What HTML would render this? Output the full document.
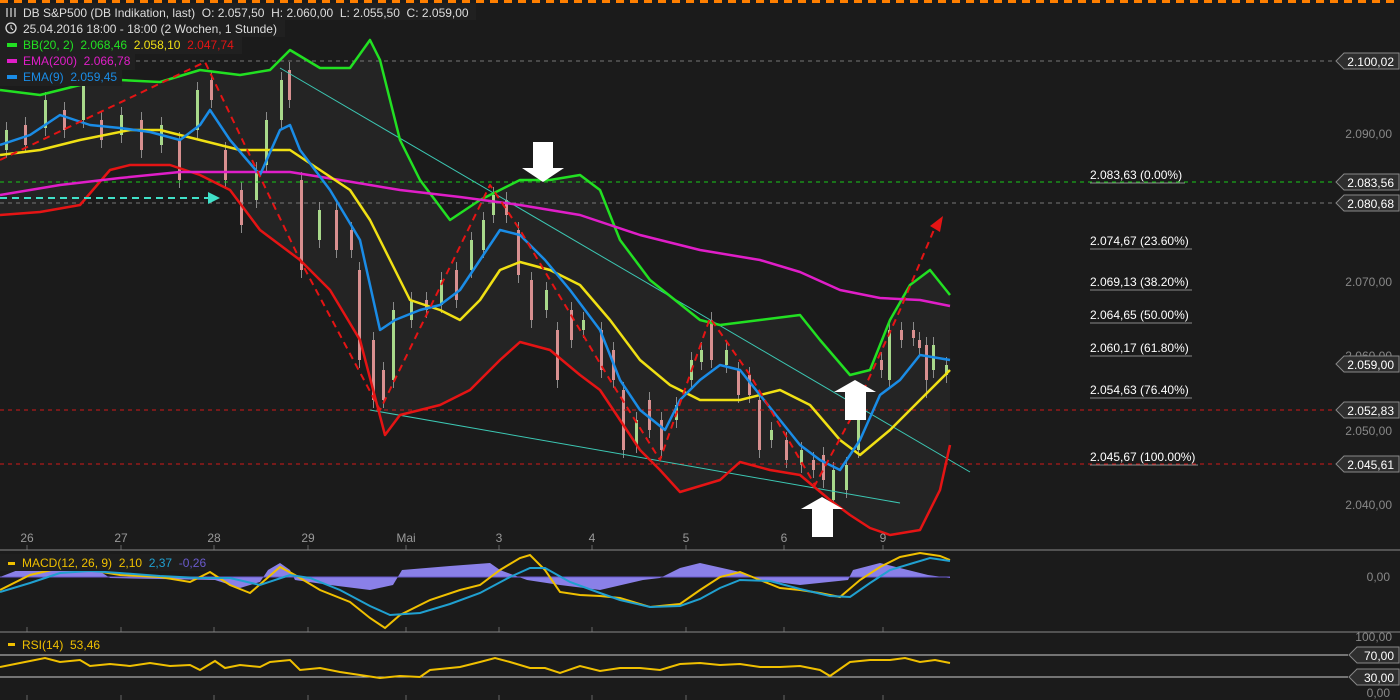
<!DOCTYPE html>
<html><head><meta charset="utf-8"><style>
html,body{margin:0;padding:0;background:#1b1b1b;}
svg{display:block;font-family:"Liberation Sans",sans-serif;}
text{white-space:pre;}
</style></head><body>
<svg width="1400" height="700" viewBox="0 0 1400 700" xmlns="http://www.w3.org/2000/svg">
<rect width="1400" height="700" fill="#1b1b1b"/>
<line x1="0" y1="1.5" x2="1400" y2="1.5" stroke="#ff7f00" stroke-width="3" stroke-dasharray="8,6"/>
<polygon fill="#242424" points="0,90 40,95 80,85 120,80 160,82 200,70 240,75 270,70 290,50 320,68 350,68 370,40 380,60 400,140 420,180 450,220 480,200 500,190 520,180 550,180 580,175 600,190 620,240 650,280 700,320 720,325 760,320 800,315 820,340 850,375 870,370 890,320 910,285 930,270 950,295 950,445 940,490 920,530 890,535 870,528 850,515 830,500 800,475 770,470 740,462 720,480 680,492 660,470 640,450 620,420 600,390 580,375 550,350 520,342 500,360 470,390 440,405 400,415 385,435 360,340 330,290 300,260 260,230 230,190 200,175 170,165 130,165 110,170 80,205 40,212 0,215"/>
<path stroke="#8a8a8a" stroke-width="1" fill="none" d="M6.5 122V158M25.5 117V153M45.5 92V136M64.5 102V138M83.5 77V128M101.5 112V148M121.5 107V143M141.5 112V158M161.5 117V153M179.5 132V188M197.5 82V138M211.5 72V108M225.5 142V188M241.5 182V233M256.5 162V208M266.5 112V173M281.5 72V128M289.5 62V108M301.5 172V278M319.5 202V248M336.5 202V258M351.5 222V258M359.5 262V368M373.5 332V408M383.5 362V408M393.5 302V388M411.5 292V328M426.5 292V318M441.5 272V313M456.5 262V308M471.5 232V278M483.5 212V258M493.5 187V223M506.5 192V223M518.5 222V283M531.5 272V328M546.5 282V318M557.5 322V388M571.5 302V348M583.5 312V338M601.5 322V378M613.5 342V388M623.5 382V458M636.5 412V453M649.5 392V438M661.5 412V458M676.5 397V428M691.5 352V388M701.5 342V370M711.5 312V368M726.5 342V373M738.5 362V403M749.5 367V403M759.5 392V458M771.5 422V448M786.5 432V468M801.5 442V473M813.5 452V478M823.5 447V488M833.5 462V508M846.5 457V498M858.5 392V458M881.5 352V378M889.5 322V388M901.5 322V348M913.5 322V346M919.5 332V356M926.5 337V398M933.5 337V378M946.5 357V383"/>
<g fill="#d89090">
<rect x="24" y="125" width="3" height="20"/><rect x="63" y="110" width="3" height="20"/><rect x="100" y="120" width="3" height="20"/><rect x="140" y="120" width="3" height="30"/><rect x="178" y="140" width="3" height="40"/><rect x="210" y="80" width="3" height="20"/><rect x="224" y="150" width="3" height="30"/><rect x="240" y="190" width="3" height="35"/><rect x="288" y="70" width="3" height="30"/><rect x="300" y="180" width="3" height="90"/><rect x="335" y="210" width="3" height="40"/><rect x="350" y="230" width="3" height="20"/><rect x="358" y="270" width="3" height="90"/><rect x="372" y="340" width="3" height="60"/><rect x="382" y="370" width="3" height="30"/><rect x="425" y="300" width="3" height="10"/><rect x="455" y="270" width="3" height="30"/><rect x="505" y="200" width="3" height="15"/><rect x="517" y="230" width="3" height="45"/><rect x="530" y="280" width="3" height="40"/><rect x="556" y="330" width="3" height="50"/><rect x="570" y="310" width="3" height="30"/><rect x="600" y="330" width="3" height="40"/><rect x="612" y="350" width="3" height="30"/><rect x="622" y="390" width="3" height="60"/><rect x="648" y="400" width="3" height="30"/><rect x="660" y="420" width="3" height="30"/><rect x="710" y="320" width="3" height="40"/><rect x="737" y="370" width="3" height="25"/><rect x="748" y="375" width="3" height="20"/><rect x="758" y="400" width="3" height="50"/><rect x="785" y="440" width="3" height="20"/><rect x="812" y="460" width="3" height="10"/><rect x="822" y="455" width="3" height="25"/><rect x="880" y="360" width="3" height="10"/><rect x="900" y="330" width="3" height="10"/><rect x="912" y="330" width="3" height="8"/><rect x="918" y="340" width="3" height="8"/><rect x="925" y="345" width="3" height="35"/>
</g>
<g fill="#a8d88a">
<rect x="5" y="130" width="3" height="20"/><rect x="44" y="100" width="3" height="28"/><rect x="82" y="85" width="3" height="35"/><rect x="120" y="115" width="3" height="20"/><rect x="160" y="125" width="3" height="20"/><rect x="196" y="90" width="3" height="40"/><rect x="255" y="170" width="3" height="30"/><rect x="265" y="120" width="3" height="45"/><rect x="280" y="80" width="3" height="40"/><rect x="318" y="210" width="3" height="30"/><rect x="392" y="310" width="3" height="70"/><rect x="410" y="300" width="3" height="20"/><rect x="440" y="280" width="3" height="25"/><rect x="470" y="240" width="3" height="30"/><rect x="482" y="220" width="3" height="30"/><rect x="492" y="195" width="3" height="20"/><rect x="545" y="290" width="3" height="20"/><rect x="582" y="320" width="3" height="10"/><rect x="635" y="420" width="3" height="25"/><rect x="675" y="405" width="3" height="15"/><rect x="690" y="360" width="3" height="20"/><rect x="700" y="350" width="3" height="12"/><rect x="725" y="350" width="3" height="15"/><rect x="770" y="430" width="3" height="10"/><rect x="800" y="450" width="3" height="15"/><rect x="832" y="470" width="3" height="30"/><rect x="845" y="465" width="3" height="25"/><rect x="857" y="400" width="3" height="50"/><rect x="888" y="330" width="3" height="50"/><rect x="932" y="345" width="3" height="25"/><rect x="945" y="365" width="3" height="10"/>
</g>
<line x1="0" y1="61" x2="1338" y2="61" stroke="#777" stroke-dasharray="4,4"/>
<line x1="0" y1="182" x2="1338" y2="182" stroke="#19c819" stroke-dasharray="4,4"/>
<line x1="0" y1="203" x2="1338" y2="203" stroke="#777" stroke-dasharray="4,4"/>
<line x1="0" y1="410" x2="1338" y2="410" stroke="#d01818" stroke-dasharray="4,4"/>
<line x1="0" y1="464" x2="1338" y2="464" stroke="#d01818" stroke-dasharray="4,4"/>
<line x1="280" y1="68" x2="970" y2="472" stroke="#3cc8b4" stroke-width="1"/>
<line x1="370" y1="410" x2="900" y2="503" stroke="#3cc8b4" stroke-width="1"/>
<g fill="none" stroke-width="2.5" stroke-linejoin="round">
<polyline stroke="#22e022" points="0,90 40,95 80,85 120,80 160,82 200,70 240,75 270,70 290,50 320,68 350,68 370,40 380,60 400,140 420,180 450,220 480,200 500,190 520,180 550,180 580,175 600,190 620,240 650,280 700,320 720,325 760,320 800,315 820,340 850,375 870,370 890,320 910,285 930,270 950,295"/>
<polyline stroke="#e51414" points="0,215 40,212 80,205 110,170 130,165 170,165 200,175 230,190 260,230 300,260 330,290 360,340 385,435 400,415 440,405 470,390 500,360 520,342 550,350 580,375 600,390 620,420 640,450 660,470 680,492 720,480 740,462 770,470 800,475 830,500 850,515 870,528 890,535 920,530 940,490 950,445"/>
<polyline stroke="#e01ec8" points="0,195 60,185 120,178 180,172 240,172 290,172 340,180 400,190 460,197 520,205 580,215 640,235 700,250 760,260 800,272 840,290 880,298 920,300 950,306"/>
<polyline stroke="#f0e014" points="0,155 40,150 80,140 130,130 160,130 200,140 240,150 290,150 320,170 350,190 370,220 390,260 410,300 440,310 460,320 480,300 500,270 520,262 550,270 580,285 610,320 640,360 670,385 700,400 740,400 780,390 810,405 840,440 860,455 890,430 920,400 950,370"/>
<polyline stroke="#1a8ce6" points="0,145 30,135 60,115 90,125 120,128 150,132 180,140 200,125 210,110 230,140 260,175 280,130 290,125 300,150 330,190 360,240 380,330 395,320 420,310 440,305 460,290 480,260 500,230 520,235 545,260 570,290 600,330 620,380 640,410 665,430 680,400 700,380 720,365 740,370 760,395 780,420 800,445 820,460 840,470 860,440 880,395 900,380 920,355 950,360"/>
<polyline stroke="#e51414" stroke-width="2" stroke-dasharray="7,5" points="0,160 205,62 300,260 380,410 490,185 520,230 610,380 660,460 710,318 750,375 815,485 850,420 900,310 936,225"/>
<line x1="0" y1="198" x2="210" y2="198" stroke="#40e0c8" stroke-width="2" stroke-dasharray="7,5"/>
</g>
<polygon points="943,216 930,226 940,232" fill="#e51414"/>
<polygon points="220,198 208,192 208,204" fill="#40e0c8"/>
<polygon points="533,142 553,142 553,168 564,168 543,182 522,168 533,168" fill="#fff"/>
<polygon points="845,420 866,420 866,392 876,392 855,380 834,392 845,392" fill="#fff"/>
<polygon points="812,537 833,537 833,509 843,509 822,497 801,509 812,509" fill="#fff"/>
<g font-size="12" fill="#fff">
<text x="1090" y="179">2.083,63 (0.00%)</text>
<text x="1090" y="245">2.074,67 (23.60%)</text>
<text x="1090" y="286">2.069,13 (38.20%)</text>
<text x="1090" y="319">2.064,65 (50.00%)</text>
<text x="1090" y="352">2.060,17 (61.80%)</text>
<text x="1090" y="394">2.054,63 (76.40%)</text>
<text x="1090" y="461">2.045,67 (100.00%)</text>
</g>
<g stroke="#888" stroke-width="1">
<line x1="1090" y1="183" x2="1185" y2="183"/><line x1="1090" y1="249" x2="1192" y2="249"/>
<line x1="1090" y1="290" x2="1192" y2="290"/><line x1="1090" y1="323" x2="1192" y2="323"/>
<line x1="1090" y1="356" x2="1192" y2="356"/><line x1="1090" y1="398" x2="1192" y2="398"/>
<line x1="1090" y1="465" x2="1198" y2="465"/>
</g>
<g font-size="12" fill="#888" text-anchor="end">
<text x="1392" y="138">2.090,00</text><text x="1392" y="286">2.070,00</text>
<text x="1392" y="360">2.060,00</text><text x="1392" y="435">2.050,00</text>
<text x="1392" y="509">2.040,00</text><text x="1390" y="581">0,00</text>
<text x="1392" y="641">100,00</text><text x="1390" y="697">0,00</text>
</g>
<g fill="#2e2e2e" stroke="#888">
<polygon points="1336,61 1344,53 1399,53 1399,69 1344,69"/>
<polygon points="1336,182 1344,174 1399,174 1399,190 1344,190"/>
<polygon points="1336,203 1344,195 1399,195 1399,211 1344,211"/>
<polygon points="1336,364 1344,356 1399,356 1399,372 1344,372"/>
<polygon points="1336,410 1344,402 1399,402 1399,418 1344,418"/>
<polygon points="1336,464 1344,456 1399,456 1399,472 1344,472"/>
<polygon points="1349,655 1357,647 1399,647 1399,663 1357,663"/>
<polygon points="1349,677 1357,669 1399,669 1399,685 1357,685"/>
</g>
<g font-size="12" fill="#fff" text-anchor="end">
<text x="1394" y="66">2.100,02</text><text x="1394" y="187">2.083,56</text><text x="1394" y="208">2.080,68</text><text x="1394" y="369">2.059,00</text><text x="1394" y="415">2.052,83</text><text x="1394" y="469">2.045,61</text><text x="1394" y="660">70,00</text><text x="1394" y="682">30,00</text>
</g>
<g font-size="12" fill="#999" text-anchor="middle">
<text x="27" y="542">26</text><text x="121" y="542">27</text><text x="214" y="542">28</text><text x="308" y="542">29</text><text x="406" y="542">Mai</text><text x="499" y="542">3</text><text x="592" y="542">4</text><text x="686" y="542">5</text><text x="784" y="542">6</text><text x="883" y="542">9</text>
</g>
<path stroke="#666" d="M27 545V550M121 545V550M214 545V550M308 545V550M406 545V550M499 545V550M592 545V550M686 545V550M784 545V550M883 545V550M27 627V632M121 627V632M214 627V632M308 627V632M406 627V632M499 627V632M592 627V632M686 627V632M784 627V632M883 627V632M27 695V700M121 695V700M214 695V700M308 695V700M406 695V700M499 695V700M592 695V700M686 695V700M784 695V700M883 695V700"/>
<line x1="0" y1="550" x2="1400" y2="550" stroke="#888"/>
<line x1="0" y1="632" x2="1400" y2="632" stroke="#888"/>
<polygon fill="#8a80e8" points="0,577 18,570 50,565 98,570 110,578 215,580 240,588 260,582 268,570 280,563 290,570 295,580 330,585 370,590 393,585 402,570 450,566 490,563 500,570 527,580 560,585 600,590 643,580 660,578 680,568 700,563 740,572 760,580 800,585 848,580 853,570 880,563 928,575 950,578 950,577"/>
<line x1="0" y1="577" x2="950" y2="577" stroke="#6a5acd"/>
<polyline fill="none" stroke="#f0c000" stroke-width="2" points="0,590 30,575 60,568 90,570 120,575 160,577 190,582 210,572 230,585 250,593 265,580 280,567 295,575 320,590 350,602 370,618 385,628 400,615 430,600 460,590 480,585 500,570 520,558 530,555 545,570 560,592 580,595 600,596 620,598 650,607 680,604 700,590 720,577 740,572 760,580 780,588 800,590 820,593 840,597 860,580 880,567 900,557 920,553 940,556 950,560"/>
<polyline fill="none" stroke="#20a0d0" stroke-width="2" points="0,592 30,583 60,573 90,571 120,573 160,576 200,578 230,578 260,585 290,575 310,578 340,590 370,606 390,615 420,613 450,604 480,593 510,577 530,568 545,568 570,582 600,593 620,600 650,607 680,606 700,599 720,588 740,580 770,581 800,589 830,596 850,597 870,583 890,570 910,564 930,558 950,561"/>
<rect x="0" y="554" width="210" height="17" fill="#1e1e1e"/>
<rect x="8" y="562" width="7" height="3" fill="#f0c000"/>
<text x="22" y="567" font-size="12" fill="#f0c000">MACD(12, 26, 9)  2,10  <tspan fill="#20a0d0">2,37</tspan>  <tspan fill="#6a5acd">-0,26</tspan></text>
<line x1="0" y1="655" x2="1348" y2="655" stroke="#ccc"/>
<line x1="0" y1="677" x2="1348" y2="677" stroke="#ccc"/>
<polyline fill="none" stroke="#f0c000" stroke-width="2" points="0,667 20,663 45,658 60,662 80,660 90,666 110,664 130,666 150,663 170,666 190,665 200,670 215,661 225,668 240,665 260,667 270,662 290,660 300,670 320,668 340,672 360,675 380,678 400,676 420,677 430,670 460,667 480,662 495,658 510,662 530,668 545,668 560,673 580,666 600,671 620,668 640,668 660,670 680,664 700,663 720,665 740,664 760,667 780,667 800,666 820,670 830,676 850,662 870,660 890,660 905,658 920,662 935,660 950,663"/>
<rect x="8" y="643" width="7" height="3" fill="#f0c000"/>
<text x="22" y="649" font-size="12" fill="#f0c000">RSI(14)  53,46</text>
<g font-size="12">
<rect x="0" y="3" width="476" height="17" fill="#202020"/>
<rect x="0" y="20" width="285" height="17" fill="#202020"/>
<rect x="0" y="37" width="242" height="17" fill="#202020"/>
<rect x="0" y="53" width="135" height="17" fill="#202020"/>
<rect x="0" y="69" width="122" height="17" fill="#202020"/>
<g stroke="#ddd" stroke-width="1.2"><line x1="7" y1="8" x2="7" y2="17"/><line x1="11" y1="8" x2="11" y2="17"/><line x1="15" y1="8" x2="15" y2="17"/></g>
<text x="23" y="17" fill="#ddd">DB S&amp;P500 (DB Indikation, last)  O: 2.057,50  H: 2.060,00  L: 2.055,50  C: 2.059,00</text>
<circle cx="11" cy="28" r="5" fill="none" stroke="#ddd" stroke-width="1.3"/><polyline points="11,25 11,28 13,30" fill="none" stroke="#ddd"/>
<text x="23" y="33" fill="#ddd">25.04.2016 18:00 - 18:00 (2 Wochen, 1 Stunde)</text>
<rect x="7" y="43" width="10" height="4" fill="#22e022"/>
<text x="23" y="49" fill="#22e022">BB(20, 2)  2.068,46  <tspan fill="#f0e014">2.058,10</tspan>  <tspan fill="#e51414">2.047,74</tspan></text>
<rect x="7" y="59" width="10" height="4" fill="#e01ec8"/>
<text x="23" y="65" fill="#e01ec8">EMA(200)  2.066,78</text>
<rect x="7" y="75" width="10" height="4" fill="#1a8ce6"/>
<text x="23" y="81" fill="#1a8ce6">EMA(9)  2.059,45</text>
</g>
</svg>
</body></html>
